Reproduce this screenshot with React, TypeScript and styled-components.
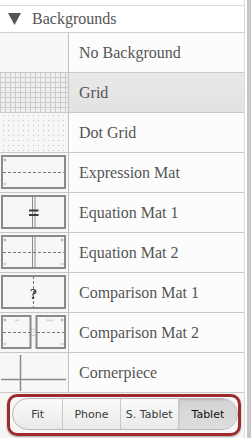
import React from 'react';
import styled, { createGlobalStyle, css } from 'styled-components';

type Kind =
  | 'none'
  | 'grid'
  | 'dots'
  | 'expression'
  | 'equation1'
  | 'equation2'
  | 'comparison1'
  | 'comparison2'
  | 'corner';

const backgrounds: { kind: Kind; label: string; selected?: boolean }[] = [
  { kind: 'none', label: 'No Background' },
  { kind: 'grid', label: 'Grid', selected: true },
  { kind: 'dots', label: 'Dot Grid' },
  { kind: 'expression', label: 'Expression Mat' },
  { kind: 'equation1', label: 'Equation Mat 1' },
  { kind: 'equation2', label: 'Equation Mat 2' },
  { kind: 'comparison1', label: 'Comparison Mat 1' },
  { kind: 'comparison2', label: 'Comparison Mat 2' },
  { kind: 'corner', label: 'Cornerpiece' },
];

const sizes = [
  { label: 'Fit', width: 50 },
  { label: 'Phone', width: 57 },
  { label: 'S. Tablet', width: 58 },
  { label: 'Tablet', width: 59, active: true },
];

const GlobalStyle = createGlobalStyle`
  html, body {
    margin: 0;
    padding: 0;
    background: #fff;
  }
  body {
    width: 251px;
    height: 438px;
    overflow: hidden;
  }
`;

const line = '#8a8a8a';

// tiny +/- marks in the corners of the mats
const Mark = ({ x, y, plus }: { x: number; y: number; plus?: boolean }) => (
  <g stroke="#999" strokeWidth="0.8">
    <line x1={x - 1.5} y1={y} x2={x + 1.5} y2={y} />
    {plus && <line x1={x} y1={y - 1.5} x2={x} y2={y + 1.5} />}
  </g>
);

const Thumb = ({ kind }: { kind: Kind }) => {
  if (kind === 'none' || kind === 'grid' || kind === 'dots') return null;

  return (
    <svg width="68" height="39" viewBox="0 0 68 39">
      {kind === 'expression' && (
        <g>
          <rect x="2" y="3" width="63" height="32" fill="none" stroke={line} strokeWidth="2" />
          <line x1="3" y1="19.5" x2="64" y2="19.5" stroke="#777" strokeDasharray="3 2" />
          <Mark x={5} y={7} plus />
          <Mark x={5} y={31} />
        </g>
      )}
      {kind === 'equation1' && (
        <g>
          <rect x="2" y="3" width="63" height="32" fill="none" stroke={line} strokeWidth="2" />
          <line x1="32.5" y1="3" x2="32.5" y2="35" stroke={line} />
          <line x1="35" y1="3" x2="35" y2="35" stroke={line} />
          <rect x="29" y="16.5" width="9.5" height="2" fill="#3a3a3a" />
          <rect x="29" y="21" width="9.5" height="2" fill="#3a3a3a" />
        </g>
      )}
      {kind === 'equation2' && (
        <g>
          <rect x="2" y="3" width="63" height="32" fill="none" stroke={line} strokeWidth="2" />
          <line x1="3" y1="19.5" x2="64" y2="19.5" stroke="#777" strokeDasharray="3 2" />
          <line x1="32.5" y1="3" x2="32.5" y2="35" stroke={line} />
          <line x1="35" y1="3" x2="35" y2="35" stroke={line} />
          <Mark x={5} y={7} plus />
          <Mark x={62} y={7} plus />
          <Mark x={5} y={31} />
          <Mark x={62} y={31} />
        </g>
      )}
      {kind === 'comparison1' && (
        <g>
          <rect x="2" y="3" width="63" height="32" fill="none" stroke={line} strokeWidth="2" />
          <line x1="33.5" y1="3" x2="33.5" y2="35" stroke="#777" strokeDasharray="3 2" />
          <text
            x="33.5"
            y="25.5"
            textAnchor="middle"
            fontFamily="'Liberation Serif', serif"
            fontWeight="bold"
            fontSize="15"
            fill="#3a3a3a"
          >
            ?
          </text>
        </g>
      )}
      {kind === 'comparison2' && (
        <g>
          <rect x="2" y="3" width="28.5" height="32" fill="none" stroke={line} strokeWidth="2" />
          <rect x="36.5" y="3" width="28.5" height="32" fill="none" stroke={line} strokeWidth="2" />
          <line x1="3" y1="19.5" x2="30" y2="19.5" stroke="#777" strokeDasharray="3 2" />
          <line x1="37" y1="19.5" x2="64" y2="19.5" stroke="#777" strokeDasharray="3 2" />
          <Mark x={5} y={7} plus />
          <Mark x={62} y={7} plus />
          <Mark x={5} y={31} />
          <Mark x={62} y={31} />
          <g fontFamily="'DejaVu Sans', sans-serif" fontSize="2.4" fill="#999" textAnchor="middle">
            <text x="17" y="8">Left</text>
            <text x="50" y="8">Right</text>
            <text x="33.5" y="16.5">What</text>
            <text x="33.5" y="19.5">is</text>
            <text x="33.5" y="22.5">greater</text>
          </g>
        </g>
      )}
      {kind === 'corner' && (
        <g stroke={line} strokeWidth="1.5">
          <line x1="20.5" y1="2" x2="20.5" y2="38" />
          <line x1="1" y1="26.5" x2="66" y2="26.5" />
        </g>
      )}
    </svg>
  );
};

const App = () => {
  return (
    <Page>
      <GlobalStyle />
      <Panel>
        <Header>
          <svg width="13" height="12" viewBox="0 0 13 12">
            <polygon points="0,0 13,0 6.5,12" fill="#555" />
          </svg>
          <span>Backgrounds</span>
        </Header>

        {backgrounds.map((bg) => (
          <Row key={bg.label}>
            <ThumbCell $kind={bg.kind}>
              <Thumb kind={bg.kind} />
            </ThumbCell>
            <Label $selected={bg.selected}>{bg.label}</Label>
          </Row>
        ))}

        <Footer>
          <Callout>
            <Segmented>
              {sizes.map((s) => (
                <Segment key={s.label} $width={s.width} $active={s.active}>
                  {s.label}
                </Segment>
              ))}
            </Segmented>
          </Callout>
        </Footer>
      </Panel>
      <Gutter />
      <ScrollStrip />
    </Page>
  );
};

const Page = styled.div`
  display: flex;
  width: 251px;
  height: 438px;
  background: #fff;
`;

const Panel = styled.div`
  display: flex;
  flex-direction: column;
  width: 244px;
  padding-top: 5px;
  border-right: 1px solid #dcdcdc;
`;

const Gutter = styled.div`
  width: 2px;
  background: #fff;
`;

const ScrollStrip = styled.div`
  width: 4px;
  background: #c6c6c6;
`;

const Header = styled.div`
  display: flex;
  align-items: center;
  gap: 11px;
  height: 26px;
  padding-left: 8px;
  border-top: 1px solid #dedede;
  border-bottom: 1px solid #cfcfcf;
  background: #fff;
  font-family: 'Liberation Serif', serif;
  font-size: 16px;
  color: #555;

  span {
    margin-top: -1px;
  }
`;

const Row = styled.div`
  display: flex;
  height: 39px;
  border-bottom: 1px solid #c9c9c9;
`;

const ThumbCell = styled.div<{ $kind: Kind }>`
  display: flex;
  width: 68px;
  border-right: 1px solid #c2c2c2;
  background: #f7f7f7;

  ${(p) =>
    p.$kind === 'grid' &&
    css`
      background-color: #efefef;
      background-image: linear-gradient(#cbcbcb 1px, transparent 1px),
        linear-gradient(90deg, #cbcbcb 1px, transparent 1px);
      background-size: 5px 5px;
      background-position: 0 4px;
    `}

  ${(p) =>
    p.$kind === 'dots' &&
    css`
      background-color: #f6f6f6;
      background-image: radial-gradient(circle, #c4c4c4 0.8px, transparent 1px);
      background-size: 5px 5px;
      background-position: 1px 0;
    `}
`;

const Label = styled.div<{ $selected?: boolean }>`
  display: flex;
  align-items: center;
  flex: 1;
  padding-left: 10px;
  font-family: 'Liberation Serif', serif;
  font-size: 16px;
  color: #555;
  background: ${(p) => (p.$selected ? 'linear-gradient(#e9e9e9, #e2e2e2)' : '#fcfcfc')};
`;

const Footer = styled.div`
  flex: 1;
  padding: 1px 0 0 7px;
  background: #f6f6f6;
`;

// red highlight drawn round the size switcher
const Callout = styled.div`
  display: flex;
  align-items: flex-start;
  width: 228px;
  height: 36px;
  border: 3px solid #9d2b2c;
  border-radius: 10px;
  box-shadow: 0 1px 2px rgba(0, 0, 0, 0.35);
`;

const Segmented = styled.div`
  display: flex;
  height: 30px;
  margin: 1px 0 0 2px;
  border: 1px solid #b8b8b8;
  border-radius: 16px;
  overflow: hidden;
  background: linear-gradient(#fbfbfb, #e9e9e9);
`;

const Segment = styled.div<{ $width: number; $active?: boolean }>`
  display: flex;
  align-items: center;
  justify-content: center;
  width: ${(p) => p.$width}px;
  font-family: 'DejaVu Sans', sans-serif;
  font-size: 11px;
  color: ${(p) => (p.$active ? '#111' : '#3a3a3a')};
  border-left: 1px solid #c8c8c8;

  &:first-child {
    border-left: none;
  }

  ${(p) =>
    p.$active &&
    css`
      background: linear-gradient(#d3d3d3, #dedede);
      box-shadow: inset 0 1px 2px rgba(0, 0, 0, 0.15);
    `}
`;

export default App;
